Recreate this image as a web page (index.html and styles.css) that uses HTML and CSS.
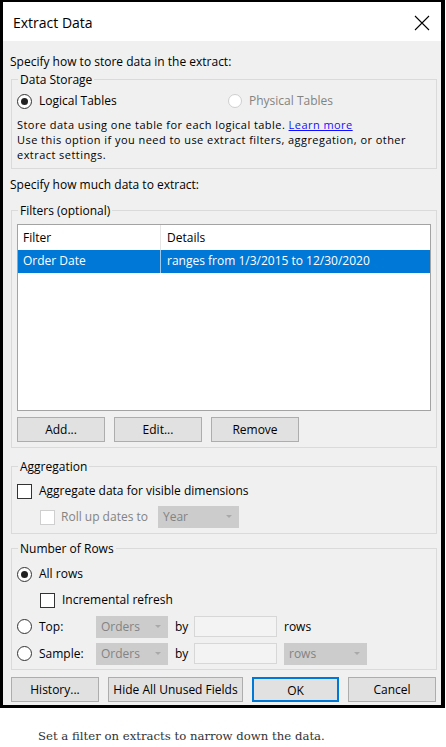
FILE: index.html
```html
<!DOCTYPE html>
<html>
<head>
<meta charset="utf-8">
<link rel="stylesheet" href="styles.css">
</head>
<body>
<div class="dialog">
  <div class="titlebar">
    <span class="title">Extract Data</span>
    <svg class="close" width="16" height="16" viewBox="0 0 16 16"><path d="M1 1 L15 15 M15 1 L1 15" stroke="#000" stroke-width="1.1" fill="none"/></svg>
  </div>
  <div class="body">
    <div class="line first">Specify how to store data in the extract:</div>
    <fieldset class="group storage">
      <legend>Data Storage</legend>
      <div class="row radios">
        <label class="opt opt-logical"><span class="radio on"></span>Logical Tables</label>
        <label class="opt disabled"><span class="radio dis"></span>Physical Tables</label>
      </div>
      <div class="desc">
        <div class="dline">Store data using one table for each logical table. <a href="#" class="link">Learn more</a></div>
        <div class="dline">Use this option if you need to use extract filters, aggregation, or other</div>
        <div class="dline">extract settings.</div>
      </div>
    </fieldset>
    <div class="line second">Specify how much data to extract:</div>
    <fieldset class="group filters">
      <legend>Filters (optional)</legend>
      <div class="table">
        <div class="trow head"><div class="c1">Filter</div><div class="c2">Details</div></div>
        <div class="trow sel"><div class="c1">Order Date</div><div class="c2">ranges from 1/3/2015 to 12/30/2020</div></div>
      </div>
      <div class="btnrow">
        <button class="btn">Add...</button>
        <button class="btn">Edit...</button>
        <button class="btn">Remove</button>
      </div>
    </fieldset>
    <fieldset class="group agg">
      <legend>Aggregation</legend>
      <div class="row chkrow"><span class="check"></span>Aggregate data for visible dimensions</div>
      <div class="row rollrow disabled"><span class="check dis"></span><span class="rolllbl">Roll up dates to</span><span class="select year">Year<i class="arrow"></i></span></div>
    </fieldset>
    <fieldset class="group rows">
      <legend>Number of Rows</legend>
      <div class="row allrow"><span class="radio on"></span>All rows</div>
      <div class="row incrow"><span class="check"></span>Incremental refresh</div>
      <div class="row selrow toprow">
        <span class="lblcol"><span class="radio"></span>Top:</span>
        <span class="select orders">Orders<i class="arrow"></i></span>
        <span class="by">by</span>
        <span class="input"></span>
        <span class="after">rows</span>
      </div>
      <div class="row selrow samprow">
        <span class="lblcol"><span class="radio"></span>Sample:</span>
        <span class="select orders">Orders<i class="arrow"></i></span>
        <span class="by">by</span>
        <span class="input"></span>
        <span class="select unit">rows<i class="arrow"></i></span>
      </div>
    </fieldset>
    <div class="footer">
      <button class="btn w88">History...</button>
      <button class="btn w135">Hide All Unused Fields</button>
      <button class="btn w87 ok">OK</button>
      <button class="btn w88">Cancel</button>
    </div>
  </div>
</div>
<p class="caption">Set a filter on extracts to narrow down the data.</p>
</body>
</html>
```
FILE: styles.css
```css
* { box-sizing: border-box; }
html, body { margin: 0; padding: 0; background: #fff; }
body { font-family: "Segoe UI", "Open Sans", "Noto Sans", sans-serif; font-size: 12px; color: #000; }

.dialog {
  width: 445px;
  border: 3px solid #000;
  border-top-width: 2px;
  border-right-width: 4px;
  background: #f0f0f0;
}
.titlebar {
  height: 39px;
  background: #fff;
  display: flex;
  align-items: center;
  justify-content: space-between;
  padding: 0 11px 0 10px;
}
.title { font-size: 14px; line-height: 20px; margin-top: 3px; }
.close { margin-top: 3px; }

.body { padding: 13px 4px 3px 7px; }
.line { line-height: 15px; height: 15px; }
.second { margin-top: 8px; }

.group {
  margin: 3px 0 0 1px;
  padding: 0 5px 5px 5px;
  border: 1px solid #dadada;
  min-width: 0;
}
.group legend {
  padding: 0 2px;
  margin-left: 1px;
  line-height: 15px;
}
.storage { margin-top: 3px; padding-bottom: 6px; }
.filters { margin-top: 11px; }
.agg { margin-top: 11px; }
.rows { margin-top: 7px; }

.row { display: flex; align-items: center; line-height: 16px; }
.radios { margin-top: 6px; height: 16px; }
.opt { display: flex; align-items: center; }
.opt-logical { width: 211px; }
.disabled { color: #838383; }

.radio {
  width: 15px; height: 15px;
  border: 1px solid #333;
  border-radius: 50%;
  background: #fff;
  margin-right: 7px;
  flex: none;
  position: relative;
}
.radio.on::after {
  content: "";
  position: absolute;
  left: 3px; top: 3px;
  width: 7px; height: 7px;
  border-radius: 50%;
  background: #222;
}
.radio.dis { border-color: #cfcfcf; width: 14px; height: 14px; }

.check {
  width: 15px; height: 15px;
  border: 1px solid #333;
  background: #fff;
  margin-right: 7px;
  flex: none;
}
.check.dis { border-color: #cfcfcf; margin-right: 6px; }

.desc { margin-top: 8px; font-size: 11px; letter-spacing: 0.45px; }
.dline { height: 15px; line-height: 15px; white-space: nowrap; }
.link { color: #1010ff; text-decoration: underline; }

.table {
  margin-top: 6px;
  height: 187px;
  background: #fff;
  border: 1px solid #a3a3a3;
}
.trow { display: flex; }
.trow .c1 { width: 143px; padding-left: 5px; border-right: 1px solid #e5e5e5; }
.trow .c2 { flex: 1; padding-left: 6px; }
.head { height: 25px; line-height: 26px; }
.sel { height: 23px; line-height: 22px; background: #0078d7; color: #fff; }
.sel .c1 { border-right-color: #9cc8ec; }

.btnrow { display: flex; gap: 9px; margin-top: 6px; }
.btn {
  font: inherit;
  color: #000;
  width: 88px;
  height: 25px;
  background: #e1e1e1;
  border: 1px solid #adadad;
  padding: 0;
  line-height: 23px;
}
.w87 { width: 87px; }
.w88 { width: 88px; }
.w135 { width: 135px; }
.ok { border: 2px solid #0078d7; }

.chkrow { margin-top: 9px; height: 16px; }
.rollrow { margin-top: 7px; height: 22px; padding-left: 23px; }
.rolllbl { width: 97px; }

.select {
  position: relative;
  height: 22px;
  line-height: 21px;
  background: #cccccc;
  color: #838383;
  padding-left: 5px;
  flex: none;
}
.select .arrow {
  position: absolute;
  right: 7px; top: 9px;
  width: 0; height: 0;
  border-left: 3px solid transparent;
  border-right: 3px solid transparent;
  border-top: 3px solid #a9a9a9;
}
.year { width: 81px; }
.orders { width: 72px; }
.unit { width: 83px; margin-left: 7px; }

.allrow { margin-top: 10px; height: 16px; }
.incrow { margin-top: 10px; height: 16px; padding-left: 23px; }
.selrow { height: 21px; }
.toprow { margin-top: 8px; }
.samprow { margin-top: 6px; }
.lblcol { display: flex; align-items: center; width: 79px; }
.by { width: 19px; margin-left: 7px; }
.input { width: 83px; height: 21px; background: #f3f3f3; border: 1px solid #d7d7d7; flex: none; }
.after { margin-left: 7px; }

.footer { display: flex; gap: 9px; margin: 7px 0 0 1px; }

.caption {
  margin: 20px 0 0 38px;
  font-family: "DejaVu Serif", "Liberation Serif", serif;
  font-size: 11.7px;
  line-height: 16px;
  color: #333;
}
```
